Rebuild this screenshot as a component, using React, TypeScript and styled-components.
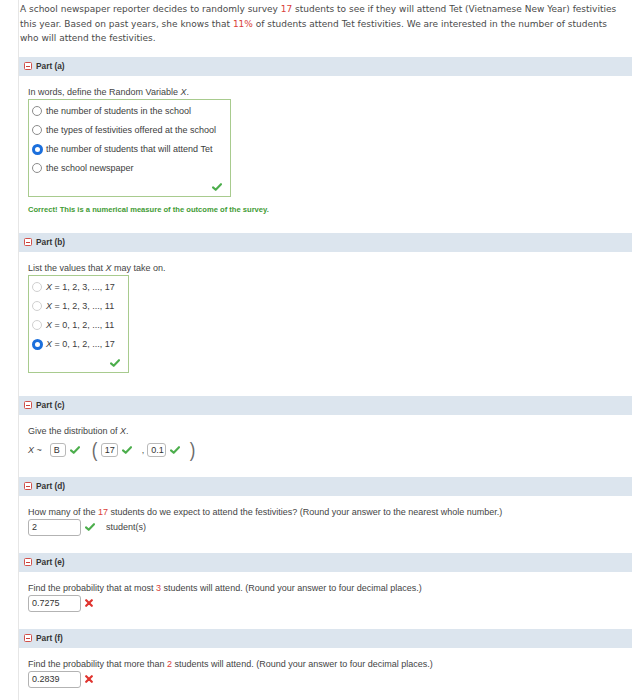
import React from 'react';
import styled, { createGlobalStyle, css } from 'styled-components';

const GlobalStyle = createGlobalStyle`
  html, body {
    margin: 0;
    padding: 0;
    background: #ffffff;
  }
  body {
    font-family: "Liberation Sans", Arial, sans-serif;
  }
`;

const Page = styled.div`
  margin-left: 18px;
  border-left: 1px solid #e6e6e6;
  min-height: 700px;
`;

const Intro = styled.p`
  margin: 0;
  padding: 2px 4px 11px 1px;
  font-family: "DejaVu Sans", Verdana, sans-serif;
  font-size: 9px;
  line-height: 14.5px;
  color: #4a4a4a;
  white-space: nowrap;
`;

const Hot = styled.span`
  color: #d9413b;
`;

const PartHeader = styled.div`
  display: flex;
  align-items: center;
  gap: 4px;
  height: 19px;
  padding-left: 5px;
  background: #dce5ee;
  font-size: 8.3px;
  font-weight: 700;
  color: #333333;
`;

const CollapseIcon = styled.span`
  display: inline-flex;
  align-items: center;
  justify-content: center;
  box-sizing: border-box;
  width: 8px;
  height: 8px;
  border: 1px solid #d2504a;
  border-radius: 1.5px;
  background: #ffffff;

  &::after {
    content: '';
    width: 4px;
    height: 1px;
    background: #c9403a;
  }
`;

const PartBody = styled.div<{ $tail: number }>`
  padding: 10px 10px ${({ $tail }) => $tail}px 9px;
  font-size: 9px;
  color: #444444;
`;

const Question = styled.div`
  line-height: 12px;
  white-space: nowrap;
`;

const Var = styled.i`
  font-style: italic;
`;

const ChoiceBox = styled.div<{ $width: number }>`
  display: flex;
  flex-direction: column;
  box-sizing: border-box;
  width: ${({ $width }) => $width}px;
  margin-top: 1px;
  padding-top: 2px;
  border: 1px solid #a8cb8e;
`;

const ChoiceRow = styled.div`
  display: flex;
  align-items: center;
  gap: 4px;
  height: 19px;
  padding-left: 3px;
  color: #3c3c3c;
  white-space: nowrap;
`;

const Radio = styled.span<{ $checked?: boolean; $faint?: boolean }>`
  flex: none;
  box-sizing: border-box;
  width: 10px;
  height: 10px;
  border-radius: 50%;
  border: 1px solid ${({ $faint }) => ($faint ? '#d0d0d0' : '#8c8c8c')};
  background: #ffffff;
  ${({ $checked }) =>
    $checked &&
    css`
      width: 11px;
      height: 11px;
      margin-left: -0.5px;
      margin-right: -0.5px;
      border: 3.5px solid #1b6fdc;
    `}
`;

const BoxFooter = styled.div`
  display: flex;
  justify-content: flex-end;
  align-items: center;
  height: 18px;
  padding-right: 8px;
`;

const Feedback = styled.div`
  margin-top: 7px;
  line-height: 12px;
  font-size: 7.6px;
  font-weight: 700;
  color: #3f9b35;
`;

const DistRow = styled.div`
  display: flex;
  align-items: center;
  height: 14px;
  margin-top: 6px;
  color: #444444;
`;

const SmallBox = styled.span<{ $width: number; $gap: number }>`
  display: inline-block;
  box-sizing: border-box;
  width: ${({ $width }) => $width}px;
  height: 14px;
  margin-left: ${({ $gap }) => $gap}px;
  padding-left: 3px;
  border: 1px solid #b9b9b9;
  border-radius: 3px;
  white-space: nowrap;
  line-height: 12px;
  color: #333333;
`;

const Paren = styled.span<{ $gap: number }>`
  margin-left: ${({ $gap }) => $gap}px;
  font-size: 21px;
  line-height: 14px;
  color: #6a6a6a;
  transform: scaleX(0.8);
`;

const Comma = styled.span`
  margin-left: 10px;
`;

const MarkSlot = styled.span<{ $gap?: number }>`
  display: inline-flex;
  margin-left: ${({ $gap }) => $gap ?? 4}px;
`;

const AnswerRow = styled.div`
  display: flex;
  align-items: center;
  margin-top: 1px;
`;

const AnswerInput = styled.span`
  display: inline-block;
  box-sizing: border-box;
  width: 53px;
  height: 17px;
  padding-left: 3px;
  border: 1px solid #b3b3b3;
  border-radius: 3px;
  line-height: 15px;
  color: #333333;
`;

const Unit = styled.span`
  margin-left: 11px;
  color: #444444;
`;

const CheckMark = () => (
  <svg width="10" height="8" viewBox="0 0 10 8">
    <path d="M1 4.4 L3.7 6.8 L9 1.2" fill="none" stroke="#4cae4c" strokeWidth="2.1" strokeLinecap="round" strokeLinejoin="round" />
  </svg>
);

const CrossMark = () => (
  <svg width="8" height="8" viewBox="0 0 8 8">
    <path d="M1.2 1.2 L6.8 6.8 M6.8 1.2 L1.2 6.8" fill="none" stroke="#e0342f" strokeWidth="2.2" strokeLinecap="round" />
  </svg>
);

const Part = ({ label, tail, children }: { label: string; tail: number; children: React.ReactNode }) => (
  <section>
    <PartHeader>
      <CollapseIcon />
      Part ({label})
    </PartHeader>
    <PartBody $tail={tail}>{children}</PartBody>
  </section>
);

const definitions = [
  'the number of students in the school',
  'the types of festivities offered at the school',
  'the number of students that will attend Tet',
  'the school newspaper',
];

const valueSets = ['1, 2, 3, ..., 17', '1, 2, 3, ..., 11', '0, 1, 2, ..., 11', '0, 1, 2, ..., 17'];

export default function App() {
  return (
    <Page>
      <GlobalStyle />
      <Intro>
        A school newspaper reporter decides to randomly survey <Hot>17</Hot> students to see if they will attend Tet (Vietnamese New Year) festivities
        <br />
        this year. Based on past years, she knows that <Hot>11%</Hot> of students attend Tet festivities. We are interested in the number of students
        <br />
        who will attend the festivities.
      </Intro>

      <Part label="a" tail={17}>
        <Question>
          In words, define the Random Variable <Var>X</Var>.
        </Question>
        <ChoiceBox $width={203}>
          {definitions.map((text, i) => (
            <ChoiceRow key={text}>
              <Radio $checked={i === 2} />
              {text}
            </ChoiceRow>
          ))}
          <BoxFooter>
            <CheckMark />
          </BoxFooter>
        </ChoiceBox>
        <Feedback>Correct! This is a numerical measure of the outcome of the survey.</Feedback>
      </Part>

      <Part label="b" tail={23}>
        <Question>
          List the values that <Var>X</Var> may take on.
        </Question>
        <ChoiceBox $width={101}>
          {valueSets.map((text, i) => (
            <ChoiceRow key={text}>
              <Radio $checked={i === 3} $faint />
              <span>
                <Var>X</Var> = {text}
              </span>
            </ChoiceRow>
          ))}
          <BoxFooter>
            <CheckMark />
          </BoxFooter>
        </ChoiceBox>
      </Part>

      <Part label="c" tail={20}>
        <Question>
          Give the distribution of <Var>X</Var>.
        </Question>
        <DistRow>
          <Var>X</Var>&nbsp;~
          <SmallBox $width={16} $gap={8}>B</SmallBox>
          <MarkSlot>
            <CheckMark />
          </MarkSlot>
          <Paren $gap={11}>(</Paren>
          <SmallBox $width={17} $gap={3}>17</SmallBox>
          <MarkSlot>
            <CheckMark />
          </MarkSlot>
          <Comma>,</Comma>
          <SmallBox $width={19} $gap={3}>0.1</SmallBox>
          <MarkSlot>
            <CheckMark />
          </MarkSlot>
          <Paren $gap={9}>)</Paren>
        </DistRow>
      </Part>

      <Part label="d" tail={17}>
        <Question>
          How many of the <Hot>17</Hot> students do we expect to attend the festivities? (Round your answer to the nearest whole number.)
        </Question>
        <AnswerRow>
          <AnswerInput>2</AnswerInput>
          <MarkSlot>
            <CheckMark />
          </MarkSlot>
          <Unit>student(s)</Unit>
        </AnswerRow>
      </Part>

      <Part label="e" tail={17}>
        <Question>
          Find the probability that at most <Hot>3</Hot> students will attend. (Round your answer to four decimal places.)
        </Question>
        <AnswerRow>
          <AnswerInput>0.7275</AnswerInput>
          <MarkSlot>
            <CrossMark />
          </MarkSlot>
        </AnswerRow>
      </Part>

      <Part label="f" tail={17}>
        <Question>
          Find the probability that more than <Hot>2</Hot> students will attend. (Round your answer to four decimal places.)
        </Question>
        <AnswerRow>
          <AnswerInput>0.2839</AnswerInput>
          <MarkSlot>
            <CrossMark />
          </MarkSlot>
        </AnswerRow>
      </Part>
    </Page>
  );
}
